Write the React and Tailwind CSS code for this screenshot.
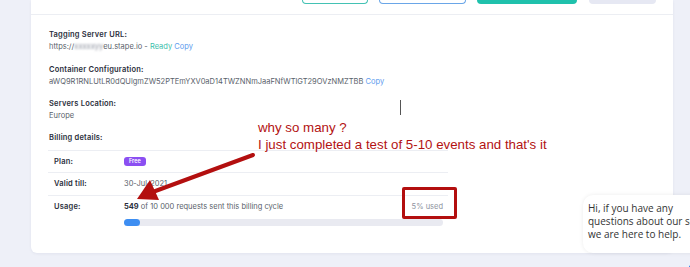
import React from "react";

export default function App() {
  const ui = { fontFamily: "Inter, 'Noto Sans', sans-serif" };
  return (
    <div className="relative w-[690px] h-[267px] overflow-hidden bg-[#eef0f8]" style={ui}>
      <div className="relative ml-[31px] w-[642px] h-[253px] bg-white rounded-b-[6px] shadow-[0_1px_3px_rgba(30,40,90,0.06)]">
        {/* header with cut-off buttons */}
        <div className="h-[15px] border-b border-[#eceef3] flex items-start gap-[11px] pl-[271px]">
          <div className="w-[66px] h-[4px] border-x border-b border-[#43c2b4] rounded-b-[5px]" />
          <div className="w-[87px] h-[4px] border-x border-b border-[#6aa6e8] rounded-b-[5px]" />
          <div className="w-[100px] h-[4px] bg-[#1fc1ac] rounded-b-[5px]" />
          <div className="w-[67px] h-[4px] bg-[#e6e8f3] rounded-b-[5px] ml-[1px]" />
        </div>

        <div className="pl-[18px] pt-[14px] text-[7.5px] leading-[12px] text-[#5a5f6b]">
          <div className="font-semibold text-[#2a2e3b] tracking-[0.2px]">Tagging Server URL:</div>
          <div>
            https://<span className="inline-block blur-[1.2px] text-[#8a8f9c]">xxxxxyy</span>eu.stape.io -{" "}
            <span className="text-[#3cc0ac]">Ready</span>{" "}
            <span className="text-[#5d9bee]">Copy</span>
          </div>

          <div className="mt-[11px] font-semibold text-[#2a2e3b] tracking-[0.2px]">Container Configuration:</div>
          <div>
            aWQ9R1RNLUtLR0dQUlgmZW52PTEmYXV0aD14TWZNNmJaaFNfWTlGT29OVzNMZTBB{" "}
            <span className="text-[#5d9bee]">Copy</span>
          </div>

          <div className="mt-[10px] font-semibold text-[#2a2e3b] tracking-[0.2px]">Servers Location:</div>
          <div>Europe</div>

          <div className="mt-[10px] font-semibold text-[#2a2e3b] tracking-[0.2px]">Billing details:</div>

          <div className="mt-[6px] w-[400px] -ml-[1px]">
            <div className="flex items-center h-[22px] border-t border-[#eceef3] pl-[6px]">
              <div className="w-[70px] font-semibold text-[#2a2e3b] tracking-[0.2px]">Plan:</div>
              <div className="h-[9px] px-[5px] rounded-[3px] bg-[#8b4ff2] text-white text-[5.5px] leading-[9px] font-semibold">Free</div>
            </div>
            <div className="flex items-center h-[23px] border-t border-[#eceef3] pl-[6px]">
              <div className="w-[70px] font-semibold text-[#2a2e3b] tracking-[0.2px]">Valid till:</div>
              <div>30-Jul-2021</div>
            </div>
            <div className="border-t border-[#eceef3] pl-[6px] pt-[5px]">
              <div className="flex">
                <div className="w-[70px] font-semibold text-[#2a2e3b] tracking-[0.2px]">Usage:</div>
                <div className="flex-1 pr-[5px]">
                  <div className="flex justify-between">
                    <div>
                      <span className="font-bold text-[#2a2e3b]">549</span> of 10 000 requests sent this billing cycle
                    </div>
                    <div className="text-[#8e93a0]">5% used</div>
                  </div>
                  <div className="mt-[6px] h-[7px] rounded-full bg-[#e9eaf1]">
                    <div className="h-[7px] w-[16px] rounded-full bg-[#3d8ef2]" />
                  </div>
                </div>
              </div>
            </div>
          </div>
        </div>

        {/* text cursor */}
        <div className="absolute left-[369px] top-[100px] w-[1px] h-[15px] bg-[#555]" />

        {/* red annotation box */}
        <div className="absolute left-[371px] top-[187px] w-[55px] h-[32px] border-[3px] border-[#b30f0f] rounded-[2px]" />

        {/* annotation text */}
        <div
          className="absolute left-[227px] top-[119px] text-[13.3px] leading-[17px] text-[#b31212] whitespace-nowrap"
          style={{ fontFamily: "'Liberation Sans', Arial, sans-serif" }}
        >
          <div>why so many ?</div>
          <div>I just completed a test of 5-10 events and that's it</div>
        </div>

        {/* arrow */}
        <svg className="absolute left-[95px] top-[150px]" width="140" height="60" viewBox="0 0 140 60">
          <line x1="127" y1="5" x2="24" y2="43" stroke="#b30f0f" strokeWidth="4" strokeLinecap="round" />
          <polygon points="11,49 24,30 33,50" fill="#b30f0f" />
        </svg>
      </div>

      {/* chat bubble */}
      <div
        className="absolute left-[583px] top-[195px] w-[130px] h-[58px] bg-white rounded-l-[10px] shadow-[0_0_4px_rgba(0,0,0,0.08)] pl-[5px] pt-[7px] text-[10px] leading-[13px] text-[#333] whitespace-nowrap"
        style={{ fontFamily: "'Open Sans', sans-serif" }}
      >
        <div>Hi, if you have any</div>
        <div>questions about our services,</div>
        <div>we are here to help.</div>
      </div>

      {/* chat launcher */}
      <div className="absolute left-[686px] top-[256px] w-[44px] h-[44px] rounded-full bg-[#1c74e9]" />
    </div>
  );
}
